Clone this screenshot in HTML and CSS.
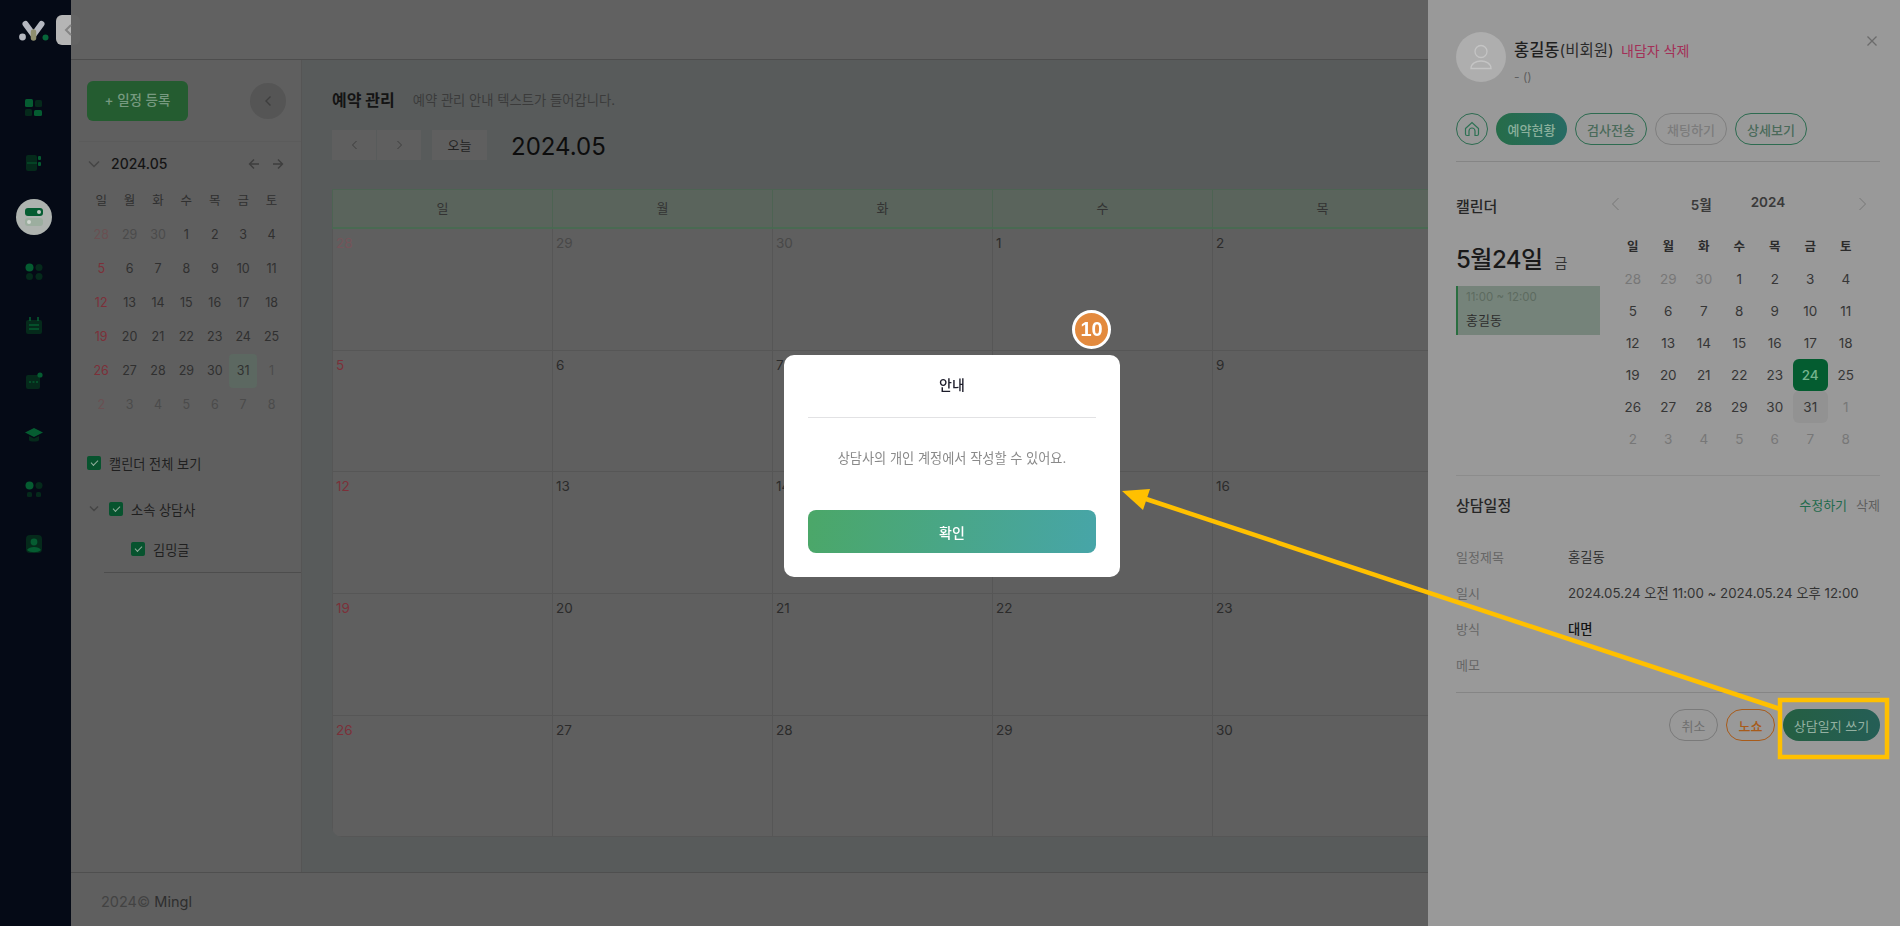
FILE: index.html
```html
<!DOCTYPE html>
<html lang="ko">
<head>
    <meta charset="UTF-8">
    <title>예약 관리</title>
    <link rel="stylesheet" href="styles.css">
</head>
<body>
    <div class="app">
        <aside class="sidebar">
            <div class="logo">
                <svg width="30" height="24" viewBox="0 0 30 24"><path d="M6.500 4 L14.500 15 L22.500 4" fill="none" stroke="#b5b8c0" stroke-width="6" stroke-linecap="round"/><path d="M14.500 12 L14.500 18" stroke="#8f8f6e" stroke-width="5.500" stroke-linecap="round"/><circle cx="3.500" cy="17" r="3.400" fill="#b5b8c0"/><circle cx="26.500" cy="17.500" r="3" fill="#07663a"/></svg>
            </div>
            <nav class="side-nav">
                <span class="side-icon"><svg width="18" height="18" viewBox="0 0 18 18"><rect x="0" y="0" width="8" height="8" rx="1.500" fill="#055c31"/><rect x="10" y="1" width="7" height="7" rx="1.500" fill="#052a1b"/><rect x="0" y="10" width="7" height="7" rx="1.500" fill="#052a1b"/><rect x="9" y="11" width="8" height="6" rx="1.500" fill="#055c31"/></svg></span>
                <span class="side-icon"><svg width="18" height="18" viewBox="0 0 18 18"><rect x="1" y="1" width="11" height="16" rx="2" fill="#052a1b"/><rect x="13" y="2" width="3" height="4" rx="1" fill="#055c31"/><rect x="13" y="8" width="3" height="4" rx="1" fill="#055c31"/><path d="M2 9h10" stroke="#055c31" stroke-width="1"/></svg></span>
                <span class="side-icon side-icon-active"><svg width="18" height="20" viewBox="0 0 18 20"><rect x="0" y="1" width="18" height="8" rx="3" fill="#055c31"/><circle cx="14" cy="5" r="2" fill="#bcc6c0"/><rect x="0" y="11" width="18" height="8" rx="3" fill="#9cae9f"/><circle cx="4" cy="15" r="2" fill="#cfd6d0"/></svg></span>
                <span class="side-icon"><svg width="18" height="18" viewBox="0 0 18 18"><circle cx="4.500" cy="4.500" r="4" fill="#055c31"/><circle cx="14" cy="4.500" r="3.500" fill="#052a1b"/><circle cx="4.500" cy="13.500" r="3.500" fill="#052a1b"/><circle cx="14" cy="13.500" r="3.500" fill="#052a1b"/></svg></span>
                <span class="side-icon"><svg width="18" height="18" viewBox="0 0 18 18"><rect x="1" y="3" width="16" height="14" rx="2" fill="#052a1b"/><path d="M5 0v4M13 0v4" stroke="#055c31" stroke-width="1.600"/><path d="M4 8h10M4 12h10" stroke="#055c31" stroke-width="1.400"/></svg></span>
                <span class="side-icon"><svg width="18" height="18" viewBox="0 0 18 18"><rect x="1" y="3" width="14" height="14" rx="2" fill="#052a1b"/><path d="M4 10h2M7.500 10h2M11 10h2" stroke="#055c31" stroke-width="1.400"/><circle cx="15" cy="3" r="2.600" fill="#055c31"/></svg></span>
                <span class="side-icon"><svg width="18" height="18" viewBox="0 0 18 18"><path d="M9 2 L18 6.500 L9 11 L0 6.500 Z" fill="#055c31"/><path d="M4 10v4c0 2 10 2 10 0v-4L9 12.500Z" fill="#052a1b"/></svg></span>
                <span class="side-icon"><svg width="18" height="18" viewBox="0 0 18 18"><circle cx="4.500" cy="4.500" r="4" fill="#055c31"/><circle cx="14" cy="4.500" r="3.500" fill="#052a1b"/><rect x="2" y="11" width="5" height="5" rx="1.500" fill="#052a1b"/><rect x="11" y="11" width="5" height="5" rx="1.500" fill="#052a1b"/></svg></span>
                <span class="side-icon"><svg width="18" height="18" viewBox="0 0 18 18"><rect x="1" y="0" width="16" height="18" rx="4" fill="#052a1b"/><circle cx="9" cy="7" r="3.400" fill="#055c31"/><path d="M2 15c2-4 12-4 14 0c-3 3-11 3-14 0Z" fill="#055c31"/></svg></span>
            </nav>
        </aside>
        <button class="side-toggle"><svg width="10" height="14" viewBox="0 0 10 14"><path d="M8 2 L3 7 L8 12" fill="none" stroke="#858585" stroke-width="2"/></svg></button>

        <div class="main">
            <header class="topbar"></header>
            <div class="main-body">
                <section class="left-panel">
                    <div class="left-head">
                        <button class="add-btn">+ 일정 등록</button>
                        <button class="collapse-btn"><svg width="8" height="12" viewBox="0 0 8 12"><path d="M6.500 1.500 L2 6 L6.500 10.500" fill="none" stroke="#3e3e3e" stroke-width="1.400"/></svg></button>
                    </div>
                    <div class="mini-head">
                        <svg width="12" height="8" viewBox="0 0 12 8"><path d="M1 1.500 L6 6.500 L11 1.500" fill="none" stroke="#454545" stroke-width="1.400"/></svg>
                        <span class="mini-title">2024.05</span>
                        <span class="mini-arrows">
                            <svg width="12" height="12" viewBox="0 0 12 12"><path d="M11 6H1.500M6 1.500 L1.500 6 L6 10.500" fill="none" stroke="#3e3e3e" stroke-width="1.400"/></svg>
                            <svg width="12" height="12" viewBox="0 0 12 12"><path d="M1 6H10.500M6 1.500 L10.500 6 L6 10.500" fill="none" stroke="#3e3e3e" stroke-width="1.400"/></svg>
                        </span>
                    </div>
                    <div class="mini-cal">
                        <b>일</b><b>월</b><b>화</b><b>수</b><b>목</b><b>금</b><b>토</b>
                        <i class="sun-off">28</i><i class="off">29</i><i class="off">30</i><i>1</i><i>2</i><i>3</i><i>4</i>
                        <i class="sun">5</i><i>6</i><i>7</i><i>8</i><i>9</i><i>10</i><i>11</i>
                        <i class="sun">12</i><i>13</i><i>14</i><i>15</i><i>16</i><i>17</i><i>18</i>
                        <i class="sun">19</i><i>20</i><i>21</i><i>22</i><i>23</i><i>24</i><i>25</i>
                        <i class="sun">26</i><i>27</i><i>28</i><i>29</i><i>30</i><i class="today">31</i><i class="off">1</i>
                        <i class="sun-off">2</i><i class="off">3</i><i class="off">4</i><i class="off">5</i><i class="off">6</i><i class="off">7</i><i class="off">8</i>
                    </div>
                    <label class="check-row check-all"><span class="check"></span>캘린더 전체 보기</label>
                    <label class="check-row check-group">
                        <svg width="12" height="8" viewBox="0 0 12 8"><path d="M2 1.500 L6 5.500 L10 1.500" fill="none" stroke="#454545" stroke-width="1.400"/></svg>
                        <span class="check"></span>소속 상담사
                    </label>
                    <label class="check-row check-person"><span class="check"></span>김밍글</label>
                    <div class="left-rule"></div>
                </section>

                <section class="content">
                    <div class="page-head">
                        <h1>예약 관리</h1>
                        <p>예약 관리 안내 텍스트가 들어갑니다.</p>
                    </div>
                    <div class="toolbar">
                        <div class="nav-group">
                            <button><svg width="7" height="10" viewBox="0 0 7 10"><path d="M5.500 1 L1.500 5 L5.500 9" fill="none" stroke="#3e3e3e" stroke-width="1"/></svg></button>
                            <button><svg width="7" height="10" viewBox="0 0 7 10"><path d="M1.500 1 L5.500 5 L1.500 9" fill="none" stroke="#3e3e3e" stroke-width="1"/></svg></button>
                        </div>
                        <button class="today-btn">오늘</button>
                        <h2>2024.05</h2>
                    </div>
                    <div class="calendar">
                        <div class="cal-head">일</div><div class="cal-head">월</div><div class="cal-head">화</div><div class="cal-head">수</div><div class="cal-head">목</div><div class="cal-head"></div><div class="cal-head"></div>
                        <div class="cell sun-off">28</div><div class="cell off">29</div><div class="cell off">30</div><div class="cell">1</div><div class="cell">2</div><div class="cell"></div><div class="cell"></div>
                        <div class="cell sun">5</div><div class="cell">6</div><div class="cell">7</div><div class="cell">8</div><div class="cell">9</div><div class="cell"></div><div class="cell"></div>
                        <div class="cell sun">12</div><div class="cell">13</div><div class="cell">14</div><div class="cell">15</div><div class="cell">16</div><div class="cell"></div><div class="cell"></div>
                        <div class="cell sun">19</div><div class="cell">20</div><div class="cell">21</div><div class="cell">22</div><div class="cell">23</div><div class="cell"></div><div class="cell"></div>
                        <div class="cell sun">26</div><div class="cell">27</div><div class="cell">28</div><div class="cell">29</div><div class="cell">30</div><div class="cell"></div><div class="cell"></div>
                    </div>
                </section>
            </div>
            <footer class="footer"><span class="footer-year">2024©</span> Mingl</footer>
        </div>
    </div>

    <aside class="detail">
        <div class="detail-top">
            <div class="avatar"><svg width="24" height="26" viewBox="0 0 24 26"><circle cx="12" cy="7.500" r="6" fill="none" stroke="#c4c4c4" stroke-width="1.300"/><path d="M2 24.500c0-10 20-10 20 0Z" fill="none" stroke="#c4c4c4" stroke-width="1.300"/></svg></div>
            <div>
                <div class="client-name"><strong>홍길동</strong>(비회원) <a>내담자 삭제</a></div>
                <div class="client-sub">- ()</div>
            </div>
            <svg class="close-x" width="12" height="12" viewBox="0 0 12 12"><path d="M1.500 1.500 L10.500 10.500M10.500 1.500 L1.500 10.500" stroke="#6b6b6b" stroke-width="1.300"/></svg>
        </div>
        <div class="pills">
            <button class="pill pill-home"><svg width="16" height="16" viewBox="0 0 16 16"><path d="M1.500 7.500 L8 1.500 L14.500 7.500V13a1.500 1.500 0 0 1-1.500 1.500H11V10a3 3 0 0 0-6 0v4.500H3A1.500 1.500 0 0 1 1.500 13Z" fill="none" stroke="#2d7153" stroke-width="1.200"/></svg></button>
            <button class="pill pill-on">예약현황</button>
            <button class="pill">검사전송</button>
            <button class="pill pill-off">채팅하기</button>
            <button class="pill">상세보기</button>
        </div>

        <div class="cal-block">
            <div class="cal-left">
                <h3>캘린더</h3>
                <div class="big-date">5월24일 <small>금</small></div>
                <div class="event">
                    <span>11:00 ~ 12:00</span>
                    <p>홍길동</p>
                </div>
            </div>
            <div class="cal-right">
                <div class="month-nav">
                    <svg width="9" height="14" viewBox="0 0 9 14"><path d="M7.500 1 L1.500 7 L7.500 13" fill="none" stroke="#777" stroke-width="1"/></svg>
                    <span class="month-label"><b>5월</b><b>2024</b></span>
                    <svg width="9" height="14" viewBox="0 0 9 14"><path d="M1.500 1 L7.500 7 L1.500 13" fill="none" stroke="#777" stroke-width="1"/></svg>
                </div>
                <div class="side-cal">
                    <b>일</b><b>월</b><b>화</b><b>수</b><b>목</b><b>금</b><b>토</b>
                    <i class="off">28</i><i class="off">29</i><i class="off">30</i><i>1</i><i>2</i><i>3</i><i>4</i>
                    <i>5</i><i>6</i><i>7</i><i>8</i><i>9</i><i>10</i><i>11</i>
                    <i>12</i><i>13</i><i>14</i><i>15</i><i>16</i><i>17</i><i>18</i>
                    <i>19</i><i>20</i><i>21</i><i>22</i><i>23</i><i class="picked">24</i><i>25</i>
                    <i>26</i><i>27</i><i>28</i><i>29</i><i>30</i><i class="now">31</i><i class="off">1</i>
                    <i class="off">2</i><i class="off">3</i><i class="off">4</i><i class="off">5</i><i class="off">6</i><i class="off">7</i><i class="off">8</i>
                </div>
            </div>
        </div>

        <div class="schedule">
            <div class="schedule-head">
                <h3>상담일정</h3>
                <span><a class="edit">수정하기</a><a>삭제</a></span>
            </div>
            <dl class="info">
                <dt>일정제목</dt><dd>홍길동</dd>
                <dt>일시</dt><dd>2024.05.24 오전 11:00 ~ 2024.05.24 오후 12:00</dd>
                <dt>방식</dt><dd class="strong">대면</dd>
                <dt>메모</dt><dd></dd>
            </dl>
        </div>
        <div class="actions">
            <button class="act act-cancel">취소</button>
            <button class="act act-noshow">노쇼</button>
            <button class="act act-write">상담일지 쓰기</button>
        </div>
    </aside>

    <div class="modal-layer">
        <div class="modal">
            <h4>안내</h4>
            <p>상담사의 개인 계정에서 작성할 수 있어요.</p>
            <button>확인</button>
            <span class="step-badge">10</span>
        </div>
    </div>

    <svg class="marks" width="1900" height="926" viewBox="0 0 1900 926">
        <rect x="1780" y="700" width="107" height="57" fill="none" stroke="#ffc000" stroke-width="4.500"/>
        <line x1="1780" y1="709" x2="1146" y2="499" stroke="#ffc000" stroke-width="4.500"/>
        <polygon points="1122,491 1150,489 1143,510" fill="#ffc000"/>
    </svg>
</body>
</html>
```

FILE: styles.css
```css
* {
    box-sizing: border-box;
}
body {
    margin: 0;
    height: 926px;
    overflow: hidden;
    font-family: Inter, "Noto Sans CJK KR", sans-serif;
    background-color: #5f5f5f;
    color: #222;
}
button {
    font-family: inherit;
    cursor: pointer;
    border: none;
    padding: 0;
}
h1, h2, h3, h4, p, dl, dd {
    margin: 0;
}
i {
    font-style: normal;
}
.app {
    display: flex;
    height: 926px;
}

/* sidebar */
.sidebar {
    width: 71px;
    flex-shrink: 0;
    background: #050a16;
    display: flex;
    flex-direction: column;
    align-items: center;
}
.logo {
    height: 54px;
    width: 100%;
    padding: 20px 0 0 0;
    display: flex;
    justify-content: center;
    margin-left: -4px;
}
.side-nav {
    margin-top: 36px;
    margin-left: -3px;
    display: flex;
    flex-direction: column;
    gap: 18.500px;
}
.side-icon {
    width: 36px;
    height: 36px;
    border-radius: 50%;
    display: flex;
    align-items: center;
    justify-content: center;
}
.side-icon-active {
    background: #aeb3af;
}
.side-toggle {
    position: absolute;
    left: 56px;
    top: 15px;
    width: 24px;
    height: 30px;
    background: linear-gradient(90deg, #b5b5b5 15px, #646464 15px);
    border-radius: 6px;
    display: flex;
    align-items: center;
    justify-content: center;
}

/* main area */
.main {
    flex: 1;
    min-width: 0;
    display: flex;
    flex-direction: column;
}
.topbar {
    height: 60px;
    flex-shrink: 0;
    background: #616161;
    border-bottom: 1px solid #4d4d4d;
}
.main-body {
    flex: 1;
    display: flex;
    min-height: 0;
}
.left-panel {
    width: 231px;
    flex-shrink: 0;
    background: #5f5f5f;
    border-right: 1px solid #555;
    padding: 20px 0 0 16px;
    font-size: 13px;
}
.left-head {
    display: flex;
    align-items: center;
    justify-content: space-between;
    padding-right: 15px;
    height: 41px;
}
.add-btn {
    width: 101px;
    height: 40px;
    padding-bottom: 3px;
    background: #245c30;
    color: #779a80;
    border-radius: 6px;
    font-size: 13.500px;
    font-weight: 500;
}
.collapse-btn {
    width: 36px;
    height: 36px;
    border-radius: 50%;
    background: #555;
    display: flex;
    align-items: center;
    justify-content: center;
}
.mini-head {
    margin: 20px 0 0 -8px;
    padding: 12px 17px 0 9px;
    border-top: 1px solid #5b5b5b;
    display: flex;
    align-items: center;
    gap: 11px;
    height: 32px;
}
.mini-title {
    font-size: 14px;
    font-weight: 500;
    color: #141414;
    flex: 1;
}
.mini-arrows {
    display: flex;
    gap: 12px;
}
.mini-cal {
    margin: 11px 0 0 0;
    display: grid;
    grid-template-columns: repeat(7, 28.400px);
    grid-auto-rows: 34px;
    text-align: center;
    line-height: 34px;
    font-size: 12.500px;
    color: #303030;
    width: 199px;
}
.mini-cal b {
    font-weight: 400;
}
.mini-cal .off {
    color: #4b4b4b;
}
.mini-cal .sun {
    color: #7c3039;
}
.mini-cal .sun-off {
    color: #6a5052;
}
.mini-cal .today {
    background: #5c6861;
    border-radius: 4px;
}
.check-row {
    display: flex;
    align-items: center;
    gap: 8px;
    font-size: 13.200px;
    color: #1f1f1f;
}
.check {
    width: 14px;
    height: 14px;
    border-radius: 2px;
    background: #07532e;
    display: flex;
    align-items: center;
    justify-content: center;
    flex-shrink: 0;
}
.check::after {
    content: "";
    width: 6px;
    height: 3px;
    margin-top: -2px;
    border-left: 1px solid #8fae9b;
    border-bottom: 1px solid #8fae9b;
    transform: rotate(-45deg);
}
.check-all {
    margin-top: 33px;
    height: 16px;
}
.check-group {
    margin-top: 30px;
    margin-left: 1px;
    height: 16px;
    gap: 10px;
}
.check-group svg {
    margin-right: -1px;
}
.check-group .check {
    margin-right: -2px;
}
.check-person {
    margin: 24px 0 0 44px;
    height: 16px;
}
.left-rule {
    margin: 15px 0 0 17px;
    height: 1px;
    background: #4d4d4d;
}

/* content */
.content {
    flex: 1;
    min-width: 0;
    background: #585b5b;
    padding: 0 0 0 30px;
}
.page-head {
    display: flex;
    align-items: center;
    gap: 18px;
    height: 36px;
    margin-top: 21px;
}
.page-head h1 {
    font-size: 16px;
    font-weight: 700;
    color: #141414;
}
.page-head p {
    font-size: 13.300px;
    color: #3b3b3b;
}
.toolbar {
    display: flex;
    align-items: center;
    height: 30px;
    margin-top: 13px;
}
.nav-group {
    display: flex;
    gap: 1px;
}
.nav-group button {
    width: 44px;
    height: 30px;
    background: #5f5f5f;
    display: flex;
    align-items: center;
    justify-content: center;
}
.today-btn {
    width: 55px;
    height: 30px;
    margin-left: 11px;
    padding-bottom: 2px;
    background: #5f5f5f;
    color: #222;
    font-size: 13px;
}
.toolbar h2 {
    margin: 2px 0 0 24px;
    font-size: 24px;
    font-weight: 400;
    color: #0d0d0d;
}
.calendar {
    margin-top: 29px;
    width: 1540px;
    display: grid;
    grid-template-columns: repeat(7, 220px);
    grid-template-rows: 40px 122px 121px 122px 122px 121px;
    background: #5f5f5f;
    border-radius: 0 0 10px 10px;
    overflow: hidden;
}
.cal-head {
    background: #5a645c;
    border: 1px solid #4d6353;
    border-width: 1px 0 2px 1px;
    border-bottom-color: #496a52;
    text-align: center;
    line-height: 36px;
    font-size: 13px;
    color: #333;
}
.cell {
    border-left: 1px solid #565656;
    border-bottom: 1px solid #565656;
    padding: 6px 3px;
    font-size: 13.500px;
    color: #2b2b2b;
}
.cell.off {
    color: #484848;
}
.cell.sun {
    color: #7c3039;
}
.cell.sun-off {
    color: #75545a;
}
.footer {
    height: 54px;
    flex-shrink: 0;
    background: #5f5f5f;
    border-top: 1px solid #4f4f4f;
    padding: 20px 0 0 30px;
    font-size: 14.500px;
    color: #2e2e2e;
}
.footer-year {
    color: #434343;
}

/* detail drawer */
.detail {
    position: fixed;
    top: 0;
    right: 0;
    width: 472px;
    height: 926px;
    background: #999;
    padding: 32px 20px 0 28px;
}
.detail-top {
    display: flex;
    gap: 8px;
    height: 50px;
}
.avatar {
    width: 50px;
    height: 50px;
    border-radius: 50%;
    background: #aeaeae;
    display: flex;
    align-items: center;
    justify-content: center;
}
.client-name {
    font-size: 15.500px;
    color: #2b2b2b;
    margin-top: 5px;
}
.client-name strong {
    font-size: 16.500px;
    font-weight: 500;
    color: #1f1f1f;
}
.client-name a {
    margin-left: 3px;
    font-size: 14px;
    color: #a32f57;
}
.client-sub {
    margin-top: 8px;
    font-size: 12px;
    color: #5f5f5f;
}
.close-x {
    margin-left: auto;
    margin-top: 3px;
    margin-right: 2px;
}
.pills {
    margin-top: 31px;
    display: flex;
    gap: 8px;
    padding-bottom: 16px;
    border-bottom: 1px solid #858585;
}
.pill {
    width: 72px;
    height: 32px;
    border-radius: 16px;
    border: 1px solid #2d6b50;
    background: transparent;
    font-size: 13px;
    color: #4a6a5a;
    font-weight: 500;
    display: flex;
    align-items: center;
    justify-content: center;
}
.pill-home {
    width: 32px;
}
.pill-on {
    width: 71px;
    border: none;
    background: linear-gradient(90deg, #266c49, #276b64);
    color: #8bb09c;
}
.pill-off {
    border-color: #7f7f7f;
    color: #7c7c7c;
}
.cal-block {
    display: flex;
    height: 314px;
    border-bottom: 1px solid #8c8c8c;
}
.cal-left {
    width: 144px;
    padding-top: 33px;
}
.cal-left h3, .schedule h3 {
    font-size: 15px;
    font-weight: 500;
    color: #262626;
}
.big-date {
    margin-top: 26px;
    font-size: 24px;
    letter-spacing: -0.500px;
    line-height: 36px;
    font-weight: 500;
    color: #191919;
}
.big-date small {
    font-size: 14px;
    margin-left: 6px;
    font-weight: 400;
    letter-spacing: 0;
    color: #333;
}
.event {
    margin-top: 5px;
    height: 49px;
    background: #75837a;
    border-left: 2px solid #2a6e40;
    padding: 4px 0 0 8px;
}
.event span {
    font-size: 11.500px;
    color: #5d6b60;
    display: block;
}
.event p {
    margin-top: 6px;
    font-size: 13px;
    color: #2d2d2d;
}
.cal-right {
    margin-left: 15px;
    flex: 1;
    padding-top: 30px;
}
.month-nav {
    height: 24px;
    display: flex;
    align-items: center;
    justify-content: space-between;
    padding: 0 13px 0 0;
    margin-left: -4px;
}
.month-label {
    display: flex;
    gap: 39px;
    font-size: 13.500px;
    color: #3a3a3a;
    margin-left: -2px;
}
.month-label b {
    font-weight: 600;
}
.side-cal {
    margin-top: 15px;
    display: grid;
    grid-template-columns: repeat(7, 35.500px);
    grid-auto-rows: 32px;
    text-align: center;
    line-height: 32px;
    font-size: 13.500px;
    color: #363636;
}
.side-cal b {
    font-weight: 700;
    font-size: 12.500px;
    color: #2b2b2b;
}
.side-cal .off {
    color: #777;
}
.side-cal .picked {
    background: #045c30;
    color: #75b48d;
    border-radius: 6px;
    font-weight: 500;
}
.side-cal .now {
    background: #929292;
    border-radius: 6px;
}
.schedule {
    padding-top: 17px;
    height: 217px;
    border-bottom: 1px solid #858585;
}
.schedule-head {
    display: flex;
    align-items: center;
    justify-content: space-between;
    height: 22px;
}
.schedule-head span {
    font-size: 13px;
    color: #5f5f5f;
    display: flex;
    gap: 9px;
}
.schedule-head .edit {
    color: #1f6a4c;
}
.info {
    margin-top: 23px;
    display: grid;
    grid-template-columns: 112px 1fr;
    grid-auto-rows: 36px;
    align-items: center;
    font-size: 13.300px;
    color: #333;
}
.info dt {
    font-size: 13px;
    color: #666;
}
.info .strong {
    color: #141414;
    font-weight: 500;
}
.actions {
    display: flex;
    justify-content: flex-end;
    gap: 8px;
    margin-top: 16px;
}
.act {
    height: 32px;
    width: 49px;
    border-radius: 16px;
    font-size: 13px;
    background: transparent;
    border: 1px solid #7a7a7a;
    color: #6f6f6f;
}
.act-noshow {
    border-color: #a85b1a;
    color: #a85b1a;
    font-weight: 500;
}
.act-write {
    width: 97px;
    border: none;
    background: linear-gradient(90deg, #255f42, #255e56);
    color: #94b1a2;
}

/* modal */
.modal-layer {
    position: fixed;
    inset: 0;
    display: flex;
    align-items: center;
    justify-content: center;
    padding: 6px 0 0 4px;
}
.modal {
    position: relative;
    width: 336px;
    height: 222px;
    background: white;
    border-radius: 10px;
    padding: 0 24px;
    text-align: center;
}
.modal h4 {
    height: 63px;
    line-height: 60px;
    font-size: 14px;
    font-weight: 500;
    color: #1c1c2a;
    border-bottom: 1px solid #e2e2e4;
}
.modal p {
    margin-top: 28px;
    margin-bottom: 1px;
    line-height: 24px;
    font-size: 13.200px;
    color: #8a8a8a;
}
.modal button {
    margin-top: 39px;
    width: 100%;
    height: 43px;
    border-radius: 8px;
    background: linear-gradient(100deg, #4ba768, #47a5a8);
    color: white;
    font-size: 14px;
    font-weight: 500;
}
.step-badge {
    position: absolute;
    right: 9px;
    top: -45px;
    width: 39px;
    height: 39px;
    border-radius: 50%;
    background: #e38a3e;
    border: 3px solid #fff;
    color: white;
    font-family: "Liberation Sans", sans-serif;
    font-size: 20px;
    font-weight: 700;
    line-height: 33px;
}

/* annotation */
.marks {
    position: fixed;
    left: 0;
    top: 0;
    pointer-events: none;
}
```
